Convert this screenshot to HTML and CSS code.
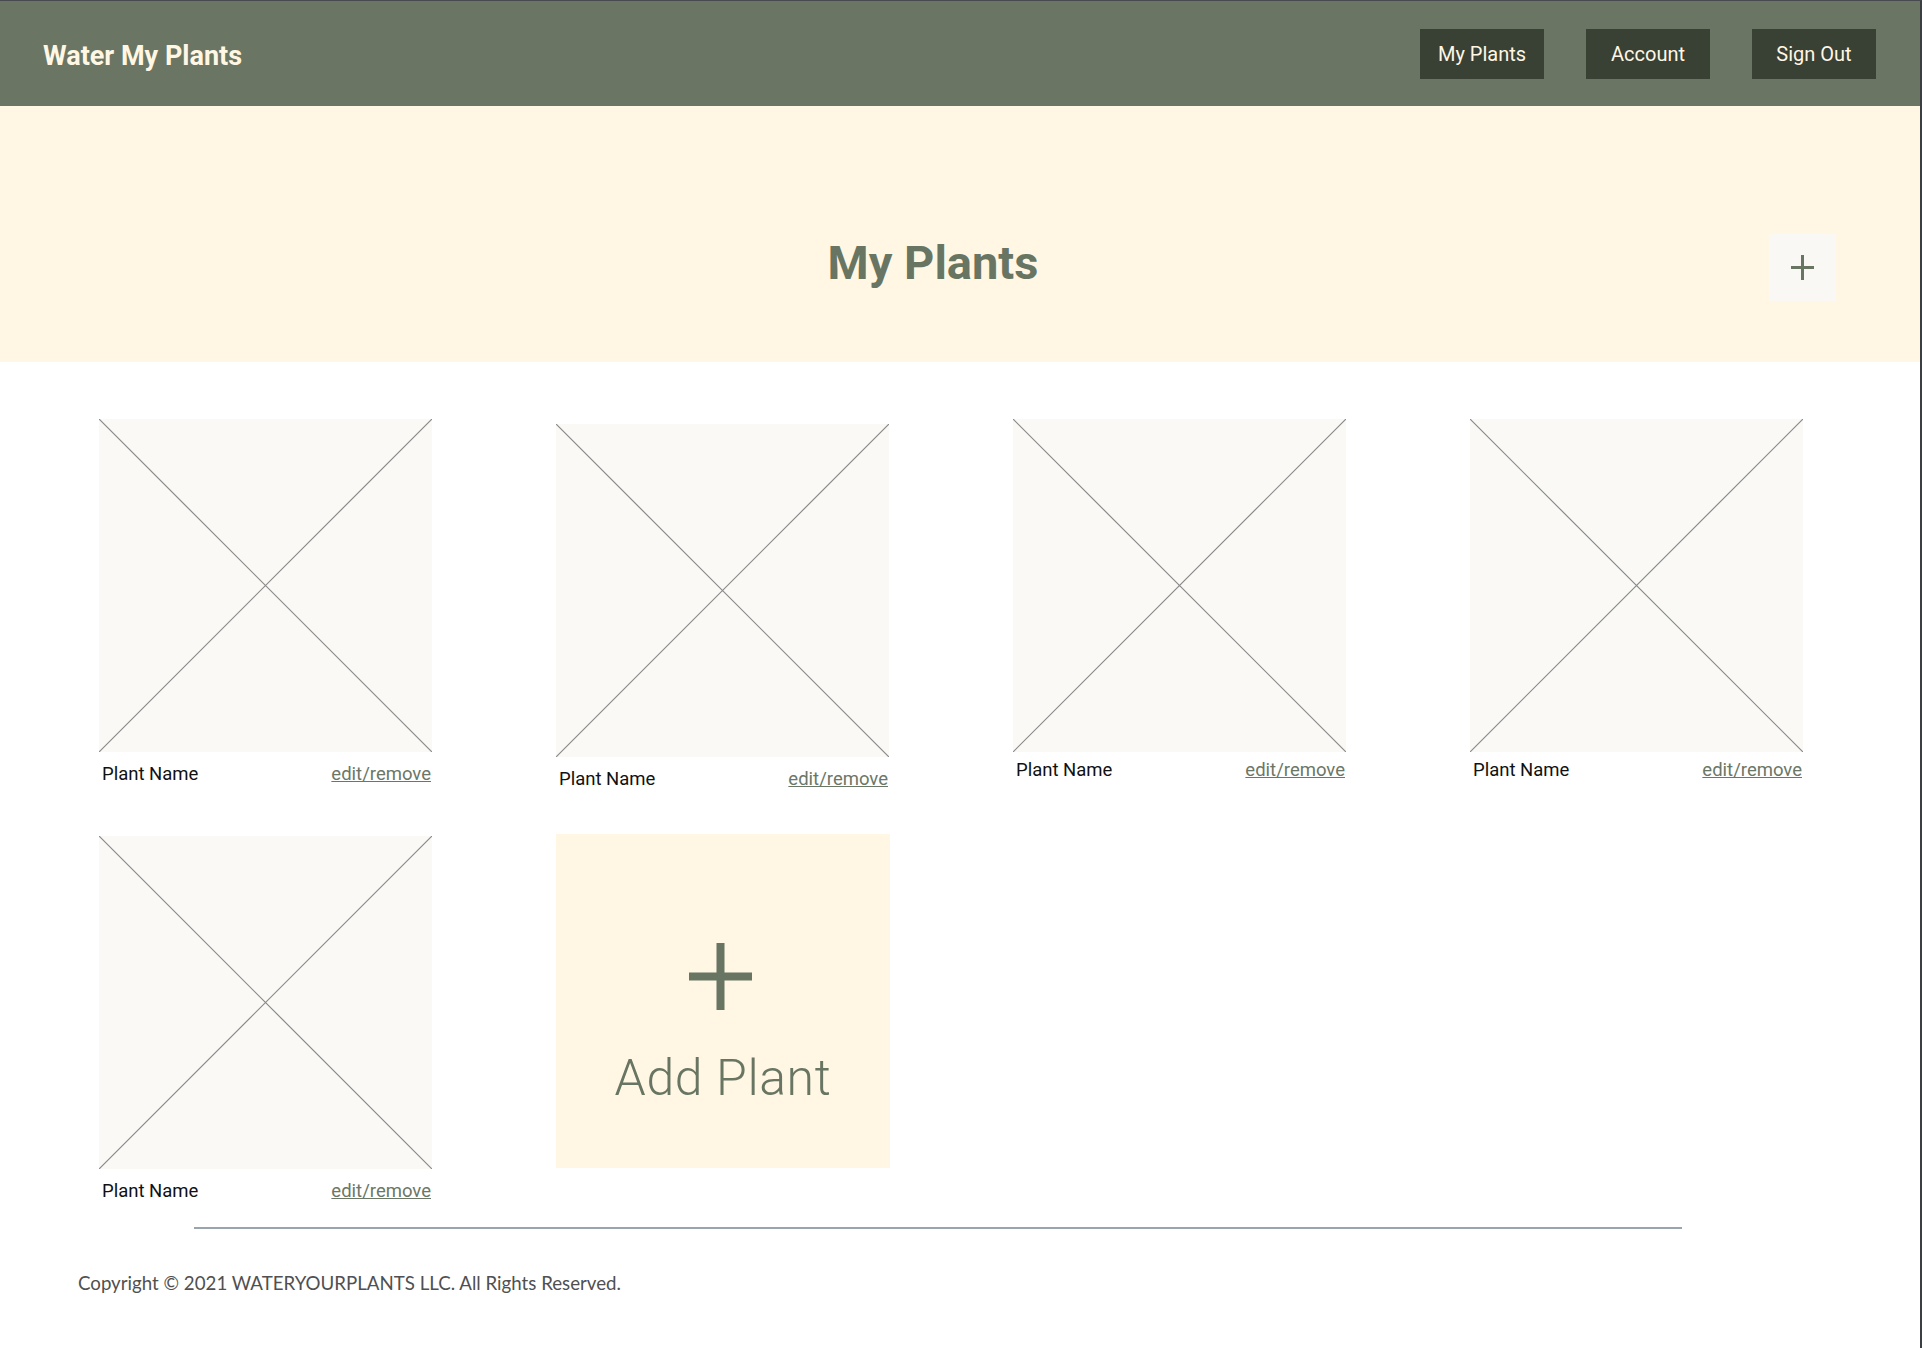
FILE: index.html
```html
<!DOCTYPE html>
<html lang="en">
<head>
    <meta charset="UTF-8">
    <meta name="viewport" content="width=device-width, initial-scale=1.0">
    <title>Water My Plants</title>
    <link rel="stylesheet" href="styles.css">
</head>
<body>
    <div class="page">
        <header class="topbar">
            <div class="logo">Water My Plants</div>
            <nav class="nav">
                <a class="nav-btn" href="#">My Plants</a>
                <a class="nav-btn" href="#">Account</a>
                <a class="nav-btn" href="#">Sign Out</a>
            </nav>
        </header>

        <section class="hero">
            <h1>My Plants</h1>
            <button class="hero-add" aria-label="Add plant">
                <svg width="23" height="25" viewBox="0 0 23 25">
                    <path d="M11.5 0 V25 M0 12.5 H23" stroke="#687562" stroke-width="3" fill="none"/>
                </svg>
            </button>
        </section>

        <main class="plants">
            <div class="card">
                <div class="thumb">
                    <svg viewBox="0 0 333 333" preserveAspectRatio="none"><path d="M0 0 L333 333 M333 0 L0 333" stroke="#8a8a8a" stroke-width="1.2"/></svg>
                </div>
                <div class="card-label"><span>Plant Name</span><a href="#">edit/remove</a></div>
            </div>
            <div class="card card-low">
                <div class="thumb">
                    <svg viewBox="0 0 333 333" preserveAspectRatio="none"><path d="M0 0 L333 333 M333 0 L0 333" stroke="#8a8a8a" stroke-width="1.2"/></svg>
                </div>
                <div class="card-label"><span>Plant Name</span><a href="#">edit/remove</a></div>
            </div>
            <div class="card">
                <div class="thumb">
                    <svg viewBox="0 0 333 333" preserveAspectRatio="none"><path d="M0 0 L333 333 M333 0 L0 333" stroke="#8a8a8a" stroke-width="1.2"/></svg>
                </div>
                <div class="card-label card-label-tight"><span>Plant Name</span><a href="#">edit/remove</a></div>
            </div>
            <div class="card">
                <div class="thumb">
                    <svg viewBox="0 0 333 333" preserveAspectRatio="none"><path d="M0 0 L333 333 M333 0 L0 333" stroke="#8a8a8a" stroke-width="1.2"/></svg>
                </div>
                <div class="card-label card-label-tight"><span>Plant Name</span><a href="#">edit/remove</a></div>
            </div>
            <div class="card">
                <div class="thumb">
                    <svg viewBox="0 0 333 333" preserveAspectRatio="none"><path d="M0 0 L333 333 M333 0 L0 333" stroke="#8a8a8a" stroke-width="1.2"/></svg>
                </div>
                <div class="card-label"><span>Plant Name</span><a href="#">edit/remove</a></div>
            </div>
            <a class="add-card" href="#">
                <svg width="63" height="67" viewBox="0 0 63 67">
                    <path d="M31.5 0 V67 M0 33.5 H63" stroke="#687562" stroke-width="8" fill="none"/>
                </svg>
                <span class="add-text">Add Plant</span>
            </a>
        </main>

        <footer class="footer">
            <div class="footer-line"></div>
            <p class="copyright">Copyright © 2021 WATERYOURPLANTS LLC. All Rights Reserved.</p>
        </footer>
    </div>
</body>
</html>
```

FILE: styles.css
```css
body {
    margin: 0;
    background: #ffffff;
    font-family: Roboto, "Noto Sans", sans-serif;
}
.page {
    min-height: 1348px;
    box-sizing: border-box;
    border-top: 1px solid #474b4f;
    border-right: 2px solid #3c3f42;
}
.topbar {
    height: 105px;
    background: #6a7563;
    display: flex;
    align-items: center;
    justify-content: space-between;
    padding: 0 44px 0 43px;
}
.logo {
    color: #fff7e4;
    font-size: 27px;
    font-weight: 700;
    padding-top: 4px;
}
.nav {
    display: flex;
    gap: 42px;
}
.nav-btn {
    width: 124px;
    height: 50px;
    display: flex;
    align-items: center;
    justify-content: center;
    background: #394034;
    color: #fff7e4;
    font-size: 20px;
    text-decoration: none;
}
.hero {
    height: 256px;
    box-sizing: border-box;
    background: #fff7e4;
    display: flex;
    align-items: center;
    padding: 66px 84px 0 97px;
}
.hero h1 {
    flex: 1;
    margin: 0 0 10px;
    text-align: center;
    font-size: 47px;
    line-height: 1;
    font-weight: 700;
    color: #687562;
}
.hero-add {
    width: 67px;
    height: 67px;
    border: none;
    padding: 0;
    background: #f9f8f4;
    display: flex;
    align-items: center;
    justify-content: center;
    cursor: pointer;
}
.plants {
    display: grid;
    grid-template-columns: repeat(4, 333px);
    column-gap: 124px;
    row-gap: 46px;
    align-items: start;
    margin-top: 57px;
    padding-left: 99px;
}
.card-low {
    margin-top: 5px;
}
.thumb {
    width: 333px;
    height: 333px;
    background: #faf9f6;
}
.thumb svg {
    display: block;
    width: 100%;
    height: 100%;
}
.card-label {
    display: flex;
    justify-content: space-between;
    margin-top: 11px;
    padding: 0 1px 0 3px;
    font-size: 18.5px;
    line-height: 22px;
    color: #111111;
}
.card-label-tight {
    margin-top: 7px;
}
.card-label a {
    color: #6b7766;
}
.add-card {
    width: 334px;
    height: 334px;
    margin-top: -2px;
    box-sizing: border-box;
    background: #fff7e4;
    display: flex;
    flex-direction: column;
    align-items: center;
    padding-top: 109px;
    gap: 43px;
    text-decoration: none;
}
.add-card svg {
    margin-left: -6px;
}
.add-text {
    font-size: 50px;
    font-weight: 300;
    line-height: 1;
    letter-spacing: 0.6px;
    color: #687562;
}
.footer {
    padding-bottom: 40px;
}
.footer-line {
    width: 1488px;
    height: 2px;
    margin: 25px 0 0 194px;
    background: #9aa4ae;
}
.copyright {
    margin: 43px 0 0 78px;
    font-family: Lato, "Liberation Sans", sans-serif;
    font-size: 18.7px;
    line-height: 22px;
    color: #505050;
}
```
